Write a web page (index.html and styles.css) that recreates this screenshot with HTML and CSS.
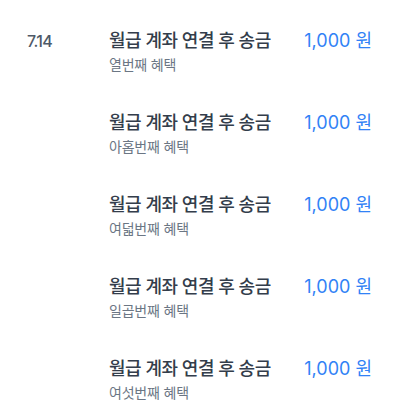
FILE: index.html
```html
<!DOCTYPE html>
<html lang="ko">
<head>
    <meta charset="UTF-8">
    <meta name="viewport" content="width=device-width, initial-scale=1.0">
    <title>혜택 내역</title>
    <link rel="stylesheet" href="styles.css">
</head>
<body>
    <ul class="history_list">
        <li class="history_item">
            <span class="history_date">7.14</span>
            <div class="history_text">
                <p class="history_title">월급 계좌 연결 후 송금</p>
                <p class="history_sub">열번째 혜택</p>
            </div>
            <span class="history_amount">1,000 원</span>
        </li>
        <li class="history_item">
            <span class="history_date"></span>
            <div class="history_text">
                <p class="history_title">월급 계좌 연결 후 송금</p>
                <p class="history_sub">아홉번째 혜택</p>
            </div>
            <span class="history_amount">1,000 원</span>
        </li>
        <li class="history_item">
            <span class="history_date"></span>
            <div class="history_text">
                <p class="history_title">월급 계좌 연결 후 송금</p>
                <p class="history_sub">여덟번째 혜택</p>
            </div>
            <span class="history_amount">1,000 원</span>
        </li>
        <li class="history_item">
            <span class="history_date"></span>
            <div class="history_text">
                <p class="history_title">월급 계좌 연결 후 송금</p>
                <p class="history_sub">일곱번째 혜택</p>
            </div>
            <span class="history_amount">1,000 원</span>
        </li>
        <li class="history_item">
            <span class="history_date"></span>
            <div class="history_text">
                <p class="history_title">월급 계좌 연결 후 송금</p>
                <p class="history_sub">여섯번째 혜택</p>
            </div>
            <span class="history_amount">1,000 원</span>
        </li>
    </ul>
</body>
</html>
```

FILE: styles.css
```css
/* 기본 설정 */
* {
    box-sizing: border-box;
    margin: 0;
    padding: 0;
}

html,
body {
    width: 100%;
    height: 100%;
    background-color: #ffffff;
    font-family: Inter, "Noto Sans CJK KR", sans-serif;
    overflow: hidden;
}

/* 목록 */
.history_list {
    list-style: none;
    padding-top: 22px;
}

.history_item {
    display: flex;
    align-items: flex-start;
    height: 82px;
    padding: 0 28px 0 27px;
}

.history_date {
    width: 82px;
    flex-shrink: 0;
    font-size: 16px;
    font-weight: 500;
    line-height: 38px;
    color: #4e5968;
    letter-spacing: -0.7px;
}

.history_text {
    flex: 1;
}

.history_title {
    font-size: 18px;
    font-weight: 500;
    line-height: 38px;
    color: #333d4b;
    letter-spacing: -0.5px;
}

.history_sub {
    font-size: 14px;
    line-height: 18px;
    color: #6b7684;
    margin-top: -4px;
    letter-spacing: -0.2px;
}

/* 금액 */
.history_amount {
    font-size: 18px;
    line-height: 38px;
    color: #3182f6;
}
```
